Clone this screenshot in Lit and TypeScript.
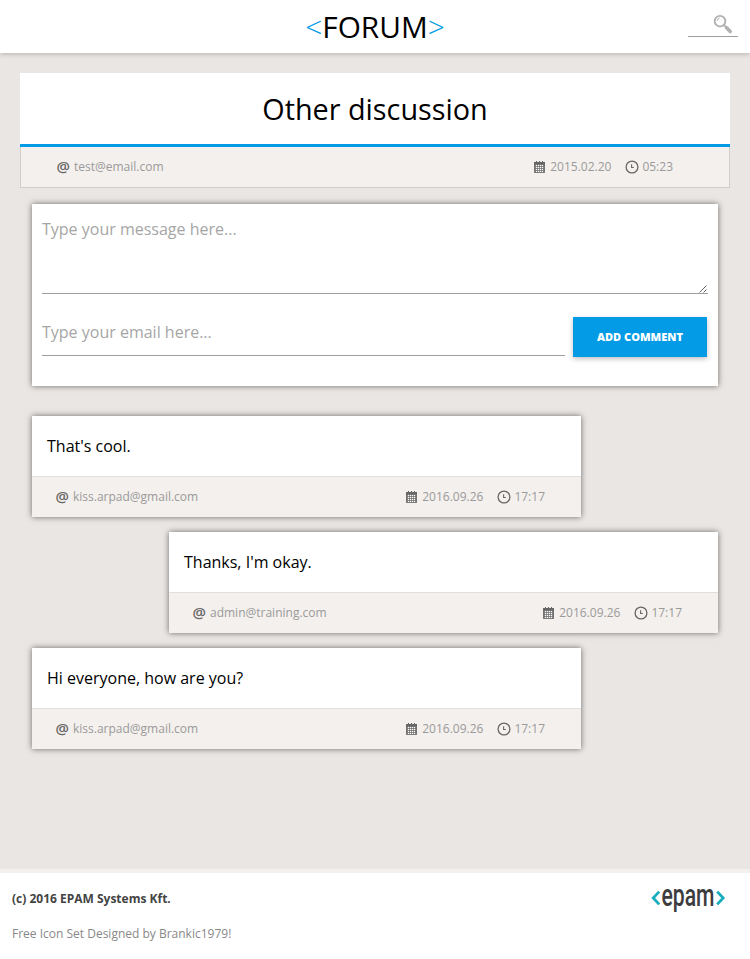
import { LitElement, html, css, svg } from "lit";
import { customElement, property } from "lit/decorators.js";

interface Comment {
  text: string;
  email: string;
  date: string;
  time: string;
  own?: boolean;
}

const COMMENTS: Comment[] = [
  { text: "That's cool.", email: "kiss.arpad@gmail.com", date: "2016.09.26", time: "17:17" },
  { text: "Thanks, I'm okay.", email: "admin@training.com", date: "2016.09.26", time: "17:17", own: true },
  { text: "Hi everyone, how are you?", email: "kiss.arpad@gmail.com", date: "2016.09.26", time: "17:17" },
];

const calendarDots = [0, 1, 2, 3].flatMap((c) =>
  [0, 1, 2, 3].map((r) => svg`<rect x=${1.85 + c * 2} y=${3.9 + r * 2} width="1.3" height="1.2" fill="#fff" />`),
);

@customElement("meta-line")
class MetaLine extends LitElement {
  @property() email = "";
  @property() date = "";
  @property() time = "";

  static styles = css`
    :host {
      display: flex;
      align-items: center;
      height: 40px;
      box-sizing: border-box;
      padding: 0 36px 0 24px;
      background: #f4f0ed;
      font-size: 12px;
      line-height: 40px;
      color: #9a9a9a;
    }
    .at {
      width: 17px;
      font-size: 15px;
      font-weight: 600;
      line-height: 38px;
      margin-bottom: 2px;
      color: #666;
      text-indent: -0.5px;
    }
    .email {
      flex: 1;
    }
    svg {
      display: block;
      flex: none;
    }
    .date {
      margin: 0 14px 0 5px;
    }
    .time {
      margin-left: 3px;
    }
  `;

  render() {
    return html`
      <span class="at">@</span><span class="email">${this.email}</span>
      <svg width="11" height="12" viewBox="0 0 11 12">
        <path d="M0 1h2V0h1v1h2V0h1v1h2V0h1v1h2V4H0Z" fill="#666" />
        <path d="M0 3.5h11v7.8q0 .7-.7.7H.7Q0 12 0 11.3Z" fill="#747372" />
        ${calendarDots}
      </svg>
      <span class="date">${this.date}</span>
      <svg width="14" height="14" viewBox="0 0 14 14" fill="none" stroke="#666">
        <circle cx="7" cy="7" r="5.9" stroke-width="1.3" />
        <path d="M6.6 4.3v3.2h2.2" stroke-width="1.1" />
      </svg>
      <span class="time">${this.time}</span>
    `;
  }
}

@customElement("app-root")
class AppRoot extends LitElement {
  static styles = css`
    :host {
      display: flex;
      flex-direction: column;
      height: 959px;
      background: #eae6e3;
      font-family: "Open Sans", sans-serif;
      color: #000;
    }
    * {
      box-sizing: border-box;
    }
    header {
      display: grid;
      grid-template-columns: 1fr auto 1fr;
      height: 53px;
      flex: none;
      background: #fff;
      box-shadow: 0 1px 5px rgba(0, 0, 0, 0.24);
    }
    .brand {
      font-size: 29.8px;
      line-height: 54px;
    }
    .brand span {
      color: #039be5;
      font-weight: 300;
    }
    .search {
      grid-column: 3;
      justify-self: end;
      display: flex;
      justify-content: flex-end;
      width: 50px;
      height: 37px;
      margin-right: 12px;
      padding: 14px 5px 0 0;
      border-bottom: 1px solid #9e9e9e;
    }
    main {
      flex: 1;
      padding: 20px 20px 0;
    }
    .title {
      margin: 0;
      height: 74px;
      background: #fff;
      border-bottom: 3px solid #039be5;
      text-align: center;
      font-size: 28.8px;
      font-weight: 400;
      line-height: 72px;
    }
    .topic-meta {
      height: 41px;
      padding: 0 20px 0 12px;
      background: #f4f0ed;
      border: 1px solid #d0cdcb;
      border-top: 0;
    }
    .form,
    .comment {
      background: #fff;
      box-shadow: 0 0 6px rgba(0, 0, 0, 0.55);
    }
    .form {
      height: 182px;
      margin: 16px 12px 0;
      padding: 0 10px;
      font-size: 16px;
      color: #a6a6a6;
    }
    .message {
      display: flex;
      justify-content: space-between;
      align-items: flex-end;
      height: 90px;
      border-bottom: 1px solid #9e9e9e;
    }
    .message span {
      align-self: flex-start;
      line-height: 50px;
    }
    .row {
      display: flex;
      gap: 8px;
      margin-top: 23px;
      padding-right: 1px;
    }
    .email {
      flex: 1;
      height: 39px;
      line-height: 30px;
      border-bottom: 1px solid #9e9e9e;
    }
    .add {
      width: 134px;
      height: 40px;
      padding: 0;
      border: 0;
      background: #039be5;
      color: #fff;
      font: 800 11px/40px "Open Sans", sans-serif;
      text-align: center;
      box-shadow: 0 2px 5px rgba(0, 0, 0, 0.25);
    }
    .comments {
      display: flex;
      flex-direction: column;
      gap: 15px;
      margin: 30px 12px 0;
    }
    .comment {
      width: 549px;
      font-size: 16px;
    }
    .own {
      align-self: flex-end;
    }
    .text {
      height: 61px;
      padding-left: 15px;
      line-height: 61px;
      border-bottom: 1px solid #e0dfde;
    }
    footer {
      display: flex;
      justify-content: space-between;
      height: 90px;
      padding: 16px 23px 0 12px;
      background: #fff;
      border-top: 4px solid #f3f1f0;
      font-size: 12px;
      line-height: 20px;
    }
    .copy {
      font-weight: 700;
      color: #444;
    }
    .credit {
      margin-top: 15px;
      color: #888;
    }
    .logo {
      display: block;
      margin-top: -16px;
      overflow: visible;
    }
    .logo text {
      font-family: "Roboto", sans-serif;
      font-weight: 500;
    }
  `;

  render() {
    return html`
      <header>
        <div></div>
        <div class="brand"><span>&lt;</span>FORUM<span>&gt;</span></div>
        <div class="search">
          <svg width="20" height="21" viewBox="0 0 20 21" fill="none" stroke="#b0b2b1">
            <circle cx="7" cy="7.2" r="5.3" stroke-width="1.9" />
            <path d="m10.8 11 3 3" stroke-width="1.8" />
            <path d="m13.6 13.8 3.6 3.7" stroke-width="3.6" stroke-linecap="round" />
            <path d="M4.1 6.8Q4.5 4.4 6.7 4.1" stroke-width="1" />
          </svg>
        </div>
      </header>
      <main>
        <h1 class="title">Other discussion</h1>
        <div class="topic-meta">
          <meta-line email="test@email.com" date="2015.02.20" time="05:23"></meta-line>
        </div>
        <section class="form">
          <div class="message">
            <span>Type your message here...</span>
            <svg width="9" height="9" viewBox="0 0 9 9" stroke="#555" stroke-width=".9">
              <path d="M.5 8.5l7-7M4.5 8.5l3-3" />
            </svg>
          </div>
          <div class="row">
            <div class="email">Type your email here...</div>
            <button class="add">ADD COMMENT</button>
          </div>
        </section>
        <section class="comments">
          ${COMMENTS.map(
            (c) => html`
              <article class="comment ${c.own ? "own" : ""}">
                <div class="text">${c.text}</div>
                <meta-line email=${c.email} date=${c.date} time=${c.time}></meta-line>
              </article>
            `,
          )}
        </section>
      </main>
      <footer>
        <div>
          <div class="copy">(c) 2016 EPAM Systems Kft.</div>
          <div class="credit">Free Icon Set Designed by Brankic1979!</div>
        </div>
        <svg class="logo" width="76" height="48" viewBox="0 0 76 48">
          <g fill="none" stroke="#18adbd" stroke-width="2.8">
            <path d="m8.2 18.6-6 6.4 6 6.4" />
            <path d="m66.2 18.6 6 6.4-6 6.4" />
          </g>
          <text x="10.5" y="33" font-size="31" fill="#3d3c3e" textLength="53" lengthAdjust="spacingAndGlyphs">epam</text>
        </svg>
      </footer>
    `;
  }
}
